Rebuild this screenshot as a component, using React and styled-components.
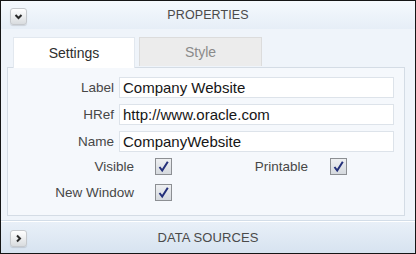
import styled, { createGlobalStyle } from "styled-components";

const GlobalStyle = createGlobalStyle`
  html, body {
    margin: 0;
    padding: 0;
    background: #ffffff;
  }
  * {
    box-sizing: border-box;
  }
`;

const Frame = styled.div`
  width: 416px;
  height: 254px;
  border: 1px solid #151515;
  display: flex;
  flex-direction: column;
  font-family: "Liberation Sans", Arial, sans-serif;
  background: #eff4fa;
  overflow: hidden;
`;

const SectionBar = styled.div`
  height: ${(p) => p.$height}px;
  display: grid;
  grid-template-columns: 36px 1fr 36px;
  align-items: center;
  background: ${(p) => p.$bg};
  border-top: ${(p) => (p.$top ? "1px solid #d3dde8" : "none")};
  box-shadow: ${(p) => (p.$top ? "inset 0 1px 0 #ffffff" : "none")};
`;

const SectionTitle = styled.div`
  text-align: center;
  font-size: ${(p) => p.$size}px;
  color: #4a4a4a;
  letter-spacing: 0.1px;
`;

const ToggleButton = styled.div`
  width: 17px;
  height: 17px;
  margin-left: 9px;
  margin-top: ${(p) => p.$offset || 0}px;
  border: 1px solid #c6c9cd;
  border-radius: 3px;
  background: linear-gradient(#ffffff, #d9dcdf);
  display: flex;
  align-items: center;
  justify-content: center;
  box-shadow: 0 1px 1px rgba(0, 0, 0, 0.12);
`;

const Body = styled.div`
  flex: 1;
  padding: 8px 10px 2px 6px;
  display: flex;
  flex-direction: column;
`;

const TabList = styled.div`
  display: flex;
  gap: 4px;
  padding-left: 6px;
  height: 30px;
  align-items: flex-start;
`;

const Tab = styled.div`
  width: ${(p) => p.$width}px;
  height: ${(p) => (p.$active ? 31 : 29)}px;
  display: flex;
  align-items: center;
  justify-content: center;
  font-size: 14px;
  color: ${(p) => (p.$active ? "#2e2e2e" : "#8a8a8a")};
  background: ${(p) => (p.$active ? "#ffffff" : "#ececec")};
  border: 1px solid ${(p) => (p.$active ? "#e2e8ef" : "#dcdcdc")};
  border-bottom: none;
  position: relative;
  z-index: ${(p) => (p.$active ? 1 : 0)};
`;

const Panel = styled.div`
  height: 149px;
  border: 1px solid #d4dce5;
  background: #f5f8fc;
  padding: 9px 10px 0 0;
  display: flex;
  flex-direction: column;
`;

const FieldRow = styled.div`
  display: grid;
  grid-template-columns: 106px 1fr;
  column-gap: 5px;
  align-items: center;
  height: 21px;
  margin-bottom: 6px;
`;

const FieldLabel = styled.div`
  text-align: right;
  font-size: 13.5px;
  color: #474747;
`;

const TextInput = styled.div`
  height: 21px;
  border: 1px solid #dde3ea;
  background: #ffffff;
  padding: 0 3px;
  display: flex;
  align-items: center;
  font-size: 15px;
  color: #161616;
`;

const CheckRow = styled.div`
  display: flex;
  align-items: center;
  height: 17px;
  margin-top: ${(p) => p.$top}px;
`;

const CheckLabel = styled.div`
  width: ${(p) => p.$width}px;
  text-align: right;
  font-size: 13.5px;
  color: #474747;
`;

const CheckBox = styled.div`
  width: 17px;
  height: 17px;
  margin-left: ${(p) => p.$gap}px;
  border: 1px solid #8c8f93;
  background: linear-gradient(#eef0f2, #d5d9de);
  display: flex;
  align-items: center;
  justify-content: center;
`;

const Chevron = ({ dir }) => (
  <svg width="9" height="9" viewBox="0 0 9 9">
    <path
      d={dir === "down" ? "M1.5 3 L4.5 6 L7.5 3" : "M3 1.5 L6 4.5 L3 7.5"}
      fill="none"
      stroke="#2a2a2a"
      strokeWidth="2"
    />
  </svg>
);

const Check = () => (
  <svg width="13" height="13" viewBox="0 0 13 13">
    <path
      d="M2.5 7 L5.2 10.5 L10.8 1.8"
      fill="none"
      stroke="#24307a"
      strokeWidth="2"
    />
  </svg>
);

const fields = [
  { label: "Label", value: "Company Website" },
  { label: "HRef", value: "http://www.oracle.com" },
  { label: "Name", value: "CompanyWebsite" },
];

export default function App() {
  return (
    <>
      <GlobalStyle />
      <Frame>
        <SectionBar $height={28} $bg="linear-gradient(#f5f9fd, #e6eef7)">
          <ToggleButton $offset={2}>
            <Chevron dir="down" />
          </ToggleButton>
          <SectionTitle $size={12.5}>PROPERTIES</SectionTitle>
        </SectionBar>
        <Body>
          <TabList>
            <Tab $active $width={122}>
              Settings
            </Tab>
            <Tab $width={123}>Style</Tab>
          </TabList>
          <Panel>
            {fields.map((f) => (
              <FieldRow key={f.label}>
                <FieldLabel>{f.label}</FieldLabel>
                <TextInput>{f.value}</TextInput>
              </FieldRow>
            ))}
            <CheckRow $top={0}>
              <CheckLabel $width={126}>Visible</CheckLabel>
              <CheckBox $gap={21}>
                <Check />
              </CheckBox>
              <CheckLabel $width={136}>Printable</CheckLabel>
              <CheckBox $gap={22}>
                <Check />
              </CheckBox>
            </CheckRow>
            <CheckRow $top={9}>
              <CheckLabel $width={126}>New Window</CheckLabel>
              <CheckBox $gap={21}>
                <Check />
              </CheckBox>
            </CheckRow>
          </Panel>
        </Body>
        <SectionBar $height={33} $top $bg="linear-gradient(#e9f0f8, #d7e3f0)">
          <ToggleButton $offset={2}>
            <Chevron dir="right" />
          </ToggleButton>
          <SectionTitle $size={13}>DATA SOURCES</SectionTitle>
        </SectionBar>
      </Frame>
    </>
  );
}
